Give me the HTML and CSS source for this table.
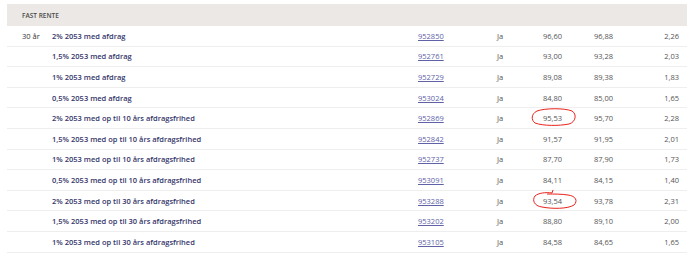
FILE: index.html
```html
<!DOCTYPE html>
<html lang="da">
<head>
<meta charset="utf-8">
<link rel="stylesheet" href="styles.css">
</head>
<body>
<div class="wrap">
<table class="rates">
<thead>
<tr><th class="c-term">FAST RENTE</th><th class="c-name"></th><th class="c-code"></th><th class="c-ja"></th><th class="c-p1"></th><th class="c-p2"></th><th class="c-y"></th></tr>
</thead>
<tbody>
<tr><td class="c-term">30 år</td><td class="c-name">2% 2053 med afdrag</td><td class="c-code"><a href="#">952850</a></td><td class="c-ja">Ja</td><td class="c-p1">96,60</td><td class="c-p2">96,88</td><td class="c-y">2,26</td></tr>
<tr><td class="c-term"></td><td class="c-name">1,5% 2053 med afdrag</td><td class="c-code"><a href="#">952761</a></td><td class="c-ja">Ja</td><td class="c-p1">93,00</td><td class="c-p2">93,28</td><td class="c-y">2,03</td></tr>
<tr><td class="c-term"></td><td class="c-name">1% 2053 med afdrag</td><td class="c-code"><a href="#">952729</a></td><td class="c-ja">Ja</td><td class="c-p1">89,08</td><td class="c-p2">89,38</td><td class="c-y">1,83</td></tr>
<tr><td class="c-term"></td><td class="c-name">0,5% 2053 med afdrag</td><td class="c-code"><a href="#">953024</a></td><td class="c-ja">Ja</td><td class="c-p1">84,80</td><td class="c-p2">85,00</td><td class="c-y">1,65</td></tr>
<tr><td class="c-term"></td><td class="c-name">2% 2053 med op til 10 års afdragsfrihed</td><td class="c-code"><a href="#">952869</a></td><td class="c-ja">Ja</td><td class="c-p1"><span class="mark">95,53<svg class="ring" viewBox="0 0 46 18" width="46" height="18"><path d="M6 3 C14 0 34 0 41 3 C46 6 45 14 38 16 C28 18 12 18 4 15 C0 12 0 6 6 3 Z" fill="none" stroke="#e8231c" stroke-width="1"/></svg></span></td><td class="c-p2">95,70</td><td class="c-y">2,28</td></tr>
<tr><td class="c-term"></td><td class="c-name">1,5% 2053 med op til 10 års afdragsfrihed</td><td class="c-code"><a href="#">952842</a></td><td class="c-ja">Ja</td><td class="c-p1">91,57</td><td class="c-p2">91,95</td><td class="c-y">2,01</td></tr>
<tr><td class="c-term"></td><td class="c-name">1% 2053 med op til 10 års afdragsfrihed</td><td class="c-code"><a href="#">952737</a></td><td class="c-ja">Ja</td><td class="c-p1">87,70</td><td class="c-p2">87,90</td><td class="c-y">1,73</td></tr>
<tr><td class="c-term"></td><td class="c-name">0,5% 2053 med op til 10 års afdragsfrihed</td><td class="c-code"><a href="#">953091</a></td><td class="c-ja">Ja</td><td class="c-p1">84,11</td><td class="c-p2">84,15</td><td class="c-y">1,40</td></tr>
<tr><td class="c-term"></td><td class="c-name">2% 2053 med op til 30 års afdragsfrihed</td><td class="c-code"><a href="#">953288</a></td><td class="c-ja">Ja</td><td class="c-p1"><span class="mark">93,54<svg class="ring ring2" viewBox="0 0 46 20" width="46" height="20"><path d="M20 3 C14 2 6 3 3 6 C0 10 2 16 10 17 C20 19 36 19 42 15 C46 11 44 6 36 5 C30 4 22 4 15 4 M20 3 L21 0" fill="none" stroke="#e8231c" stroke-width="1"/></svg></span></td><td class="c-p2">93,78</td><td class="c-y">2,31</td></tr>
<tr><td class="c-term"></td><td class="c-name">1,5% 2053 med op til 30 års afdragsfrihed</td><td class="c-code"><a href="#">953202</a></td><td class="c-ja">Ja</td><td class="c-p1">88,80</td><td class="c-p2">89,10</td><td class="c-y">2,00</td></tr>
<tr><td class="c-term"></td><td class="c-name">1% 2053 med op til 30 års afdragsfrihed</td><td class="c-code"><a href="#">953105</a></td><td class="c-ja">Ja</td><td class="c-p1">84,58</td><td class="c-p2">84,65</td><td class="c-y">1,65</td></tr>
</tbody>
</table>
</div>
</body>
</html>
```
FILE: styles.css
```css
html, body {
  margin: 0;
  padding: 0;
  background: #fff;
}
body {
  font-family: "Open Sans", "Liberation Sans", sans-serif;
  font-size: 7.5px;
  color: #555;
}
.wrap {
  padding: 4px 13px 0 7px;
}
.rates {
  width: 680px;
  border-collapse: collapse;
  table-layout: fixed;
}
.rates thead th {
  background: #ece8e5;
  height: 22px;
  padding: 0;
  font-weight: 600;
  font-size: 6.5px;
  color: #4a4a4a;
  text-align: left;
  vertical-align: middle;
  white-space: nowrap;
}
.rates td {
  height: 19.6px;
  padding: 0;
  border-bottom: 1px solid #eeeeee;
  vertical-align: middle;
  white-space: nowrap;
}
.rates .c-term { width: 30px; padding-left: 15px; }
.c-name { width: 366px; }
.c-code { width: 79px; }
.c-ja { width: 30px; }
.c-p1 { width: 35px; text-align: right; }
.c-p2 { width: 51px; text-align: right; }
.rates .c-y { width: 66px; text-align: right; padding-right: 8px; }
td.c-term { color: #333; font-weight: 400; }
td.c-name { color: #35366a; font-weight: 600; }
.c-code a { color: #6062a8; text-decoration: underline; }
.mark { position: relative; display: inline-block; }
.ring {
  position: absolute;
  left: -12px;
  top: -5px;
}
.ring2 { left: -11px; top: -6px; }
```
